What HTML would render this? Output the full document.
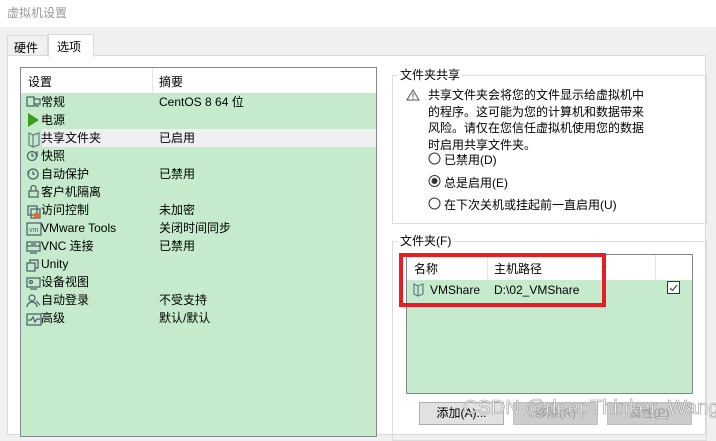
<!DOCTYPE html><html><head><meta charset="utf-8"><style>
*{margin:0;padding:0;box-sizing:border-box}
body{width:716px;height:429px;overflow:hidden;background:#f0f0f0;font-family:"Liberation Sans","Noto Sans CJK SC",sans-serif;font-size:12px;color:#000;position:relative}
.a{position:absolute;white-space:nowrap}
.row{position:absolute;left:41px;height:18px;line-height:18px}
</style></head><body>
<div class="a" style="left:0;top:0;width:716px;height:27px;background:#fff"></div>
<div class="a" style="left:7px;top:4px;color:#999;font-size:12px">虚拟机设置</div>
<div class="a" style="left:7px;top:35px;width:41px;height:21px;border:1px solid #d9d9d9;border-bottom:none;background:#f0f0f0;padding:3px 0 0 6px">硬件</div>
<div class="a" style="left:7px;top:55px;width:699px;height:380px;background:#fff;border:1px solid #d9d9d9"></div>
<div class="a" style="left:48px;top:34px;width:46px;height:23px;border:1px solid #d9d9d9;border-bottom:none;background:#fff;padding:3px 0 0 8px">选项</div>
<div class="a" style="left:20px;top:67px;width:357px;height:370px;background:#c6ebcc;border:1px solid #828790"></div>
<div class="a" style="left:21px;top:68px;width:355px;height:25px;background:#fff"></div>
<div class="a" style="left:152px;top:68px;width:1px;height:25px;background:#e5e5e5"></div>
<div class="a" style="left:28px;top:73px">设置</div>
<div class="a" style="left:159px;top:73px">摘要</div>
<div class="a" style="left:42px;top:129px;width:334px;height:18px;background:#f0f0f0"></div>
<svg class="a" style="left:26px;top:95px" width="16" height="235" fill="none" stroke="#4a5a6a" stroke-width="1.2">
<rect x="1" y="2" width="7" height="9"/><path d="M8 4h6v5h-6M9 11h4"/>
<path d="M2 18l11 7-11 7z" fill="#3a9a1a" stroke="none"/>
<path d="M3 38l4 2v12l-4-2zM7 40l6-2v12l-6 2" stroke="#6a7a8a"/>
<circle cx="6" cy="61" r="4.5"/><path d="M6 58v3h2M11 56v6"/>
<circle cx="7" cy="79" r="5"/><path d="M7 76v3h2M2 76l1 3"/>
<rect x="3" y="96" width="9" height="6"/><path d="M5 96v-3a2.5 2.5 0 015 0v3"/>
<rect x="2" y="111" width="9" height="9"/><rect x="5" y="114" width="9" height="9"/><rect x="8" y="118" width="5" height="5" fill="#f26522" stroke="none"/>
<rect x="1" y="128" width="14" height="12"/><text x="3" y="137" font-size="7" fill="#4a5a6a" stroke="none">vm</text>
<rect x="1" y="147" width="13" height="9"/><path d="M1 151h13M5 149h5M4 158h7"/>
<rect x="1" y="168" width="8" height="8"/><path d="M4 168v-3h8v8h-3"/>
<rect x="1" y="183" width="13" height="9"/><circle cx="5" cy="187" r="1.5"/><path d="M4 194h7"/>
<circle cx="6" cy="203" r="3"/><path d="M1 212a5 5 0 0110 0M10 206l4 4"/>
<rect x="1" y="219" width="14" height="11"/><path d="M2 225h3l2-3 2 5 2-3h3"/>
</svg>
<div class="row" style="top:93px">常规</div><div class="a" style="left:159px;top:93px;line-height:18px">CentOS 8 64 位</div>
<div class="row" style="top:111px">电源</div>
<div class="row" style="top:129px">共享文件夹</div><div class="a" style="left:159px;top:129px;line-height:18px">已启用</div>
<div class="row" style="top:147px">快照</div>
<div class="row" style="top:165px">自动保护</div><div class="a" style="left:159px;top:165px;line-height:18px">已禁用</div>
<div class="row" style="top:183px">客户机隔离</div>
<div class="row" style="top:201px">访问控制</div><div class="a" style="left:159px;top:201px;line-height:18px">未加密</div>
<div class="row" style="top:219px">VMware Tools</div><div class="a" style="left:159px;top:219px;line-height:18px">关闭时间同步</div>
<div class="row" style="top:237px">VNC 连接</div><div class="a" style="left:159px;top:237px;line-height:18px">已禁用</div>
<div class="row" style="top:255px">Unity</div>
<div class="row" style="top:273px">设备视图</div>
<div class="row" style="top:291px">自动登录</div><div class="a" style="left:159px;top:291px;line-height:18px">不受支持</div>
<div class="row" style="top:309px">高级</div><div class="a" style="left:159px;top:309px;line-height:18px">默认/默认</div>
<div class="a" style="left:392px;top:75px;width:315px;height:149px;border:1px solid #dcdcdc"></div>
<div class="a" style="left:398px;top:66px;background:#fff;padding:0 2px">文件夹共享</div>
<svg class="a" style="left:406px;top:89px" width="14" height="12" fill="none" stroke="#555"><path d="M7 1L1 11h12z"/><path d="M7 4v4M7 9v1"/></svg>
<div class="a" style="left:428px;top:87px;line-height:16.5px">共享文件夹会将您的文件显示给虚拟机中<br>的程序。这可能为您的计算机和数据带来<br>风险。请仅在您信任虚拟机使用您的数据<br>时启用共享文件夹。</div>
<svg class="a" style="left:428px;top:152px" width="14" height="60" fill="#fff" stroke="#333"><circle cx="6.5" cy="6.5" r="5.5"/><circle cx="6.5" cy="29" r="5.5"/><circle cx="6.5" cy="29" r="3" fill="#333" stroke="none"/><circle cx="6.5" cy="51.5" r="5.5"/></svg>
<div class="a" style="left:444px;top:151px">已禁用(D)</div>
<div class="a" style="left:444px;top:174px">总是启用(E)</div>
<div class="a" style="left:444px;top:196px">在下次关机或挂起前一直启用(U)</div>
<div class="a" style="left:392px;top:241px;width:315px;height:200px;border:1px solid #dcdcdc"></div>
<div class="a" style="left:398px;top:232px;background:#fff;padding:0 2px">文件夹(F)</div>
<div class="a" style="left:406px;top:254px;width:287px;height:140px;background:#c6ebcc;border:1px solid #828790"></div>
<div class="a" style="left:407px;top:255px;width:285px;height:25px;background:#fff"></div>
<div class="a" style="left:487px;top:255px;width:1px;height:25px;background:#e5e5e5"></div>
<div class="a" style="left:655px;top:255px;width:1px;height:25px;background:#e5e5e5"></div>
<div class="a" style="left:414px;top:260px">名称</div>
<div class="a" style="left:494px;top:260px">主机路径</div>
<svg class="a" style="left:413px;top:283px" width="12" height="14" fill="none" stroke="#6a7a8a" stroke-width="1.2"><path d="M1 1l4 2v10l-4-2zM5 3l5-2v10l-5 2"/></svg>
<div class="a" style="left:430px;top:283px">VMShare</div>
<div class="a" style="left:494px;top:283px">D:\02_VMShare</div>
<svg class="a" style="left:667px;top:281px" width="14" height="14"><rect x="0.5" y="0.5" width="12" height="12" fill="#fff" stroke="#333"/><path d="M3 7l2.5 2.5L10 4" fill="none" stroke="#333"/></svg>
<div class="a" style="left:399px;top:253px;width:207px;height:54px;border:4px solid #e81c24"></div>
<div class="a" style="left:419px;top:402px;width:85px;height:23px;background:#e1e1e1;border:1px solid #adadad;text-align:center;line-height:21px">添加(A)...</div>
<div class="a" style="left:513px;top:402px;width:85px;height:23px;background:#ccc;border:1px solid #bfbfbf;text-align:center;line-height:21px;color:#999">移除(R)</div>
<div class="a" style="left:607px;top:402px;width:85px;height:23px;background:#ccc;border:1px solid #bfbfbf;text-align:center;line-height:21px;color:#999">属性(P)</div>
<div class="a" style="left:463px;top:397px;font-size:20px;color:rgba(255,255,255,.75);-webkit-text-stroke:0.6px #999">CSDN @deepThinker_Wang</div>
</body></html>
